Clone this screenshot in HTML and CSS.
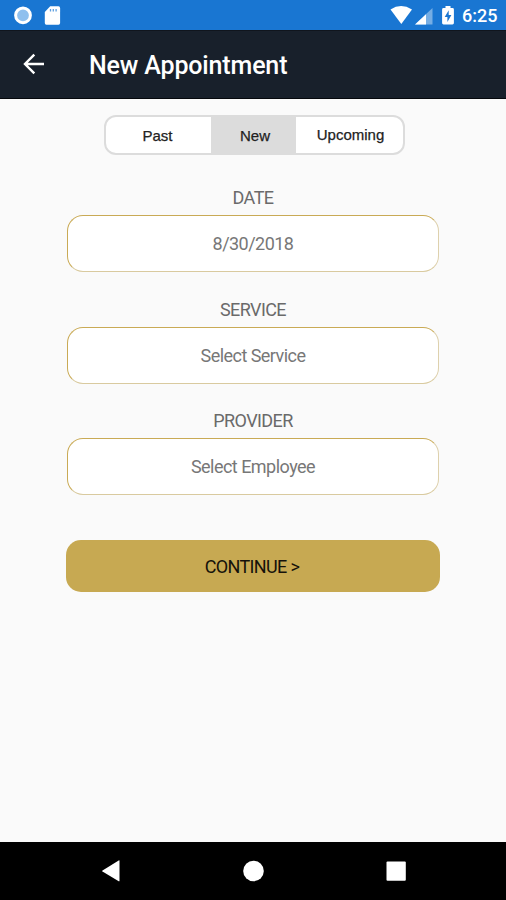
FILE: index.html
```html
<!DOCTYPE html>
<html lang="en">
<head>
<meta charset="utf-8">
<title>New Appointment</title>
<link rel="stylesheet" href="styles.css">
</head>
<body>
<div class="screen">
  <div class="status">
    <svg class="status-left" width="64" height="30" viewBox="0 0 64 30">
      <circle cx="23" cy="15.300" r="7.400" fill="#8fc0ee" stroke="#fff" stroke-width="3"/>
      <path d="M50.200 6.300h8.300q1.600 0 1.600 1.600v15.200q0 1.600-1.600 1.600H46.400q-1.600 0-1.600-1.600V12z" fill="#fff"/>
      <path d="M50.500 9v2.500M53.300 9v2.500M56.100 9v2.500" stroke="#5d9fe0" stroke-width="1.300"/>
    </svg>
    <svg class="status-right" width="66" height="30" viewBox="0 0 66 30">
      <path d="M0.500 9.400Q11 2.800 22 9.400L11.300 24z" fill="#fff"/>
      <path d="M42.500 8v16.500H25z" fill="#75ade4"/>
      <path d="M36 14.200v10.300H25z" fill="#fff"/>
      <path d="M55.500 6h5v2h2q1.400 0 1.400 1.400v13.700q0 1.400-1.400 1.400h-9q-1.400 0-1.400-1.400V9.400q0-1.400 1.400-1.400h2z" fill="#fff"/>
      <path d="M58.700 10.300l-4 6.600h2.700v5l4-6.900h-2.700z" fill="#1976d2"/>
    </svg>
    <span class="clock">6:25</span>
  </div>
  <header class="appbar">
    <svg class="back" width="24" height="24" viewBox="0 0 24 24" fill="none" stroke="#fff" stroke-width="2.400"><path d="M22 12H3.300M12.300 2.700L3 12l9.300 9.300"/></svg>
    <h1>New Appointment</h1>
  </header>
  <main>
    <nav class="tabs">
      <span class="tab past">Past</span>
      <span class="tab new">New</span>
      <span class="tab upcoming">Upcoming</span>
    </nav>
    <section class="field"><div class="label">DATE</div><div class="input">8/30/2018</div></section>
    <section class="field"><div class="label">SERVICE</div><div class="input">Select Service</div></section>
    <section class="field"><div class="label">PROVIDER</div><div class="input">Select Employee</div></section>
    <button class="continue">CONTINUE &gt;</button>
  </main>
  <footer class="navbar">
    <svg width="506" height="58" viewBox="0 0 506 58" fill="#fff">
      <path d="M119.500 18.800v20q0 .8-.8.4L102.500 29.600q-.8-.6 0-1.200L118.700 18.500q.8-.4.8.3z"/>
      <circle cx="253.500" cy="29" r="10.300"/>
      <rect x="386.500" y="19.500" width="19.300" height="19.300" rx="1"/>
    </svg>
  </footer>
</div>
</body>
</html>
```

FILE: styles.css
```css
* { box-sizing: border-box; }
body { margin: 0; background: #fafafa; font-family: Roboto, sans-serif; }
.screen { width: 506px; height: 900px; display: flex; flex-direction: column; overflow: hidden; }
.status { height: 30px; background: #1976d2; display: flex; flex: none; }
.status-right { margin-left: 326px; }
.clock { margin-left: 6px; color: #fff; font-size: 18px; font-weight: 500; line-height: 32px; }
.appbar { height: 69px; flex: none; background: #18202b; border-top: 1px solid #10151d; border-bottom: 1px solid #05080c; display: flex; align-items: center; padding-left: 22px; }
.back { display: block; margin-top: -1px; }
h1 { margin: 2px 0 0 43px; color: #fff; font-size: 25px; letter-spacing: -.15px; line-height: 30px; font-weight: 500; }
main { flex: 1; display: flex; flex-direction: column; align-items: center; }
.tabs { width: 301px; height: 40px; margin: 16px 0 0 3px; border: 2px solid #dcdcdc; border-radius: 12px; background: #fff; display: flex; overflow: hidden; font-family: "Liberation Sans", sans-serif; font-size: 15px; line-height: 38px; color: #222; text-align: center; -webkit-text-stroke: .25px #222; }
.past { width: 105px; padding-right: 2px; }
.new { width: 85px; background: #dcdcdc; padding-left: 3px; }
.upcoming { flex: 1; line-height: 35px; padding-left: 2px; }
.field { width: 372px; height: 111.700px; padding-top: 31px; }
.label { height: 29px; line-height: 23px; text-align: center; font-size: 18px; letter-spacing: -.6px; color: #6a6a6a; }
.input { height: 57px; border: 1px solid #c9aa55; border-right-color: #ded1ad; border-bottom-color: #d9ca9f; border-radius: 16px; background: #fff; color: #777; font-size: 18px; letter-spacing: -.53px; line-height: 56px; text-align: center; }
.continue { width: 374px; height: 52px; margin-top: 50px; padding: 1px 2px 0 0; border: 0; border-radius: 15px; background: #c7a952; font: 18px Roboto, sans-serif; letter-spacing: -.65px; color: #15120a; }
.navbar { height: 58px; flex: none; background: #000; }
.navbar svg { display: block; }
```
